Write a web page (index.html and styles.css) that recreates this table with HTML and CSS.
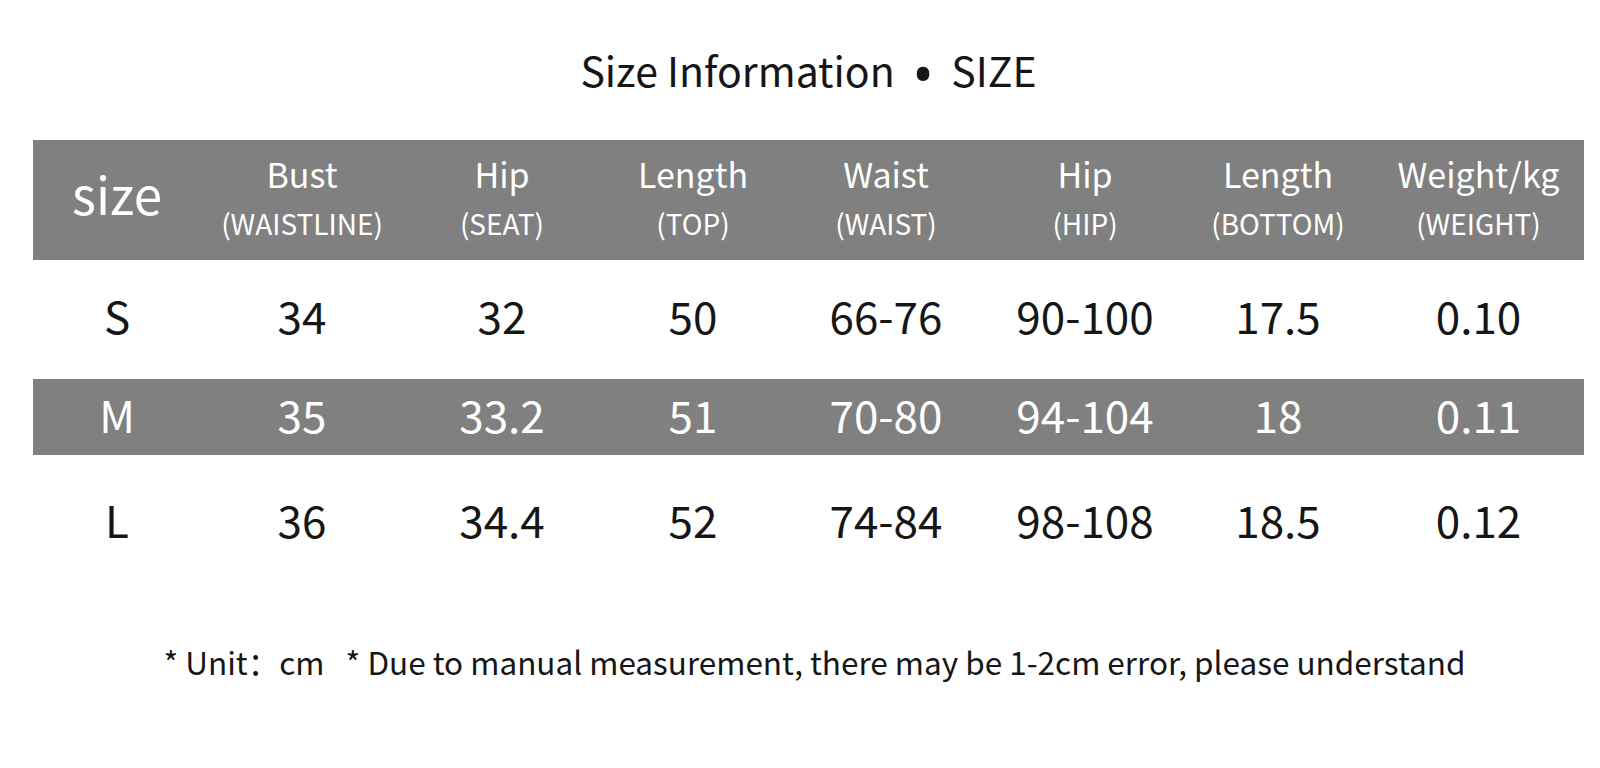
FILE: index.html
```html
<!DOCTYPE html>
<html lang="en">
<head>
<meta charset="utf-8">
<title>Size Information</title>
<link rel="stylesheet" href="styles.css">
</head>
<body>
<main class="chart">
  <h1 class="title">Size Information<span class="dot">•</span>SIZE</h1>
  <div class="table">
    <div class="row head">
      <div class="cell size-label">size</div>
      <div class="cell"><span class="main">Bust</span><span class="sub">(WAISTLINE)</span></div>
      <div class="cell"><span class="main">Hip</span><span class="sub">(SEAT)</span></div>
      <div class="cell"><span class="main">Length</span><span class="sub">(TOP)</span></div>
      <div class="cell"><span class="main">Waist</span><span class="sub">(WAIST)</span></div>
      <div class="cell"><span class="main">Hip</span><span class="sub">(HIP)</span></div>
      <div class="cell"><span class="main">Length</span><span class="sub">(BOTTOM)</span></div>
      <div class="cell"><span class="main">Weight/kg</span><span class="sub">(WEIGHT)</span></div>
    </div>
    <div class="row data row-s">
      <div class="cell">S</div>
      <div class="cell">34</div>
      <div class="cell">32</div>
      <div class="cell">50</div>
      <div class="cell">66-76</div>
      <div class="cell">90-100</div>
      <div class="cell">17.5</div>
      <div class="cell">0.10</div>
    </div>
    <div class="row data row-m">
      <div class="cell">M</div>
      <div class="cell">35</div>
      <div class="cell">33.2</div>
      <div class="cell">51</div>
      <div class="cell">70-80</div>
      <div class="cell">94-104</div>
      <div class="cell">18</div>
      <div class="cell">0.11</div>
    </div>
    <div class="row data row-l">
      <div class="cell">L</div>
      <div class="cell">36</div>
      <div class="cell">34.4</div>
      <div class="cell">52</div>
      <div class="cell">74-84</div>
      <div class="cell">98-108</div>
      <div class="cell">18.5</div>
      <div class="cell">0.12</div>
    </div>
  </div>
  <p class="note">* Unit：cm &nbsp;&nbsp;* Due to manual measurement, there may be 1-2cm error, please understand</p>
</main>
</body>
</html>
```

FILE: styles.css
```css
html, body {
  margin: 0;
  padding: 0;
  background: #ffffff;
}

body {
  min-height: 768px;
  font-family: "Noto Sans CJK SC", "Noto Sans", sans-serif;
  color: #161616;
}

.chart {
  width: 1551px;
  margin-left: 33px;
  padding-top: 45px;
}

.title {
  height: 49px;
  margin: 0 0 46px 0;
  font-size: 41px;
  font-weight: 400;
  line-height: 1.2;
  text-align: center;
  white-space: nowrap;
}

.title .dot {
  font-family: "Open Sans", "DejaVu Sans", sans-serif;
  font-size: 60px;
  line-height: 0;
  vertical-align: -9px;
  margin: 0 17px;
}

.table {
  display: flex;
  flex-direction: column;
}

.row {
  display: grid;
  grid-template-columns: 168px 202px 198px 184px 202px 196px 190px 211px;
}

.cell {
  display: flex;
  flex-direction: column;
  align-items: center;
  justify-content: center;
  line-height: 1;
  white-space: nowrap;
}

.head {
  height: 120px;
  background: #808080;
  color: #ffffff;
}

.head .cell {
  gap: 18px;
  padding-bottom: 7px;
}

.head .main {
  font-size: 34px;
}

.head .sub {
  font-size: 28px;
}

.head .size-label {
  font-size: 51px;
  padding-bottom: 14px;
}

.data .cell {
  font-size: 44px;
}

.row-s {
  height: 119px;
}

.row-s .cell {
  padding-bottom: 10px;
}

.row-m {
  height: 76px;
  background: #808080;
  color: #ffffff;
}

.row-m .cell {
  padding-bottom: 7px;
}

.row-l {
  height: 135px;
}

.row-l .cell {
  padding-bottom: 8px;
}

.note {
  margin: 49px 0 0 0;
  padding-left: 12px;
  font-size: 31.5px;
  line-height: 1.4;
  text-align: center;
  white-space: nowrap;
}
```
